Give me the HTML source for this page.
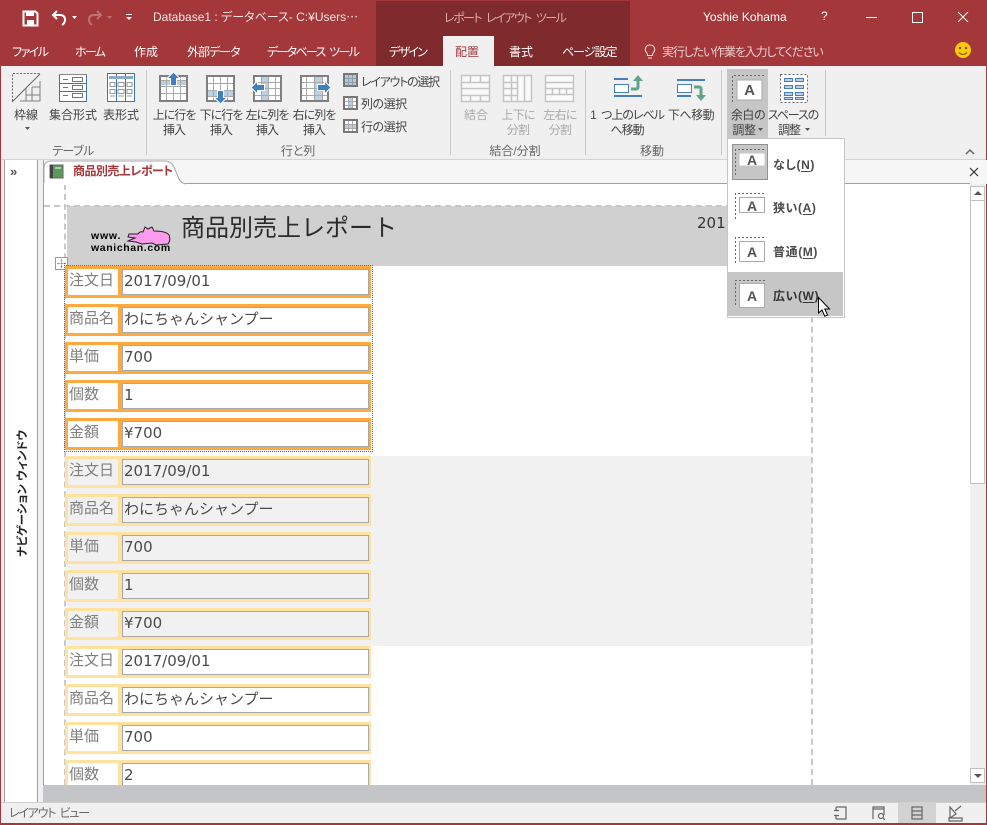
<!DOCTYPE html>
<html lang="ja"><head><meta charset="utf-8"><title>Access</title>
<style>
html,body{margin:0;padding:0;background:#f0f0f0}
#app{position:relative;width:987px;height:825px;overflow:hidden;background:#f0f0f0;font-family:"Liberation Sans","Noto Sans CJK JP",sans-serif;font-size:12px;font-feature-settings:"palt";color:#444}
.a{position:absolute}
.t{position:absolute;white-space:nowrap;line-height:16px}
.c{position:absolute;white-space:nowrap;line-height:15px;width:100px;margin-left:-50px;text-align:center}
.tab{position:absolute;top:44px;line-height:16px;color:#fff;white-space:nowrap}
.dim{color:#a9a9a9}
.g{color:#666}
.r{position:absolute;left:65px;width:306px;height:32px;background:#FFA93E}
.r.y{background:#FFE29F}
.l{position:absolute;left:3px;top:3px;width:50px;height:26px;background:#fff;color:#808080;font-family:"Noto Sans CJK JP",sans-serif;font-size:15px;line-height:22px;text-indent:1px}
.v{position:absolute;left:57px;top:3px;width:247px;height:26px;box-sizing:border-box;border:1px solid #a8a8a8;background:#fff;color:#4a4a4a;font-family:"DejaVu Sans","Noto Sans CJK JP",sans-serif;font-size:15px;line-height:23px;padding-left:1px}
.gr .l,.gr .v{background:#f1f1f1}
.k{font-family:"Noto Sans CJK JP",sans-serif;font-feature-settings:normal;line-height:21px}
.m{position:absolute;left:773px;font-weight:bold;color:#4a4a4a;line-height:16px;white-space:nowrap;letter-spacing:.6px}
.m u{text-underline-offset:2px}
</style></head><body>
<div id="app">

<div class="a" style="left:0;top:0;width:987px;height:66px;background:#A4373A"></div>
<div class="a" style="left:376px;top:1px;width:254px;height:65px;background:#7F2A2C"></div>
<div class="a" style="left:443px;top:36px;width:51px;height:30px;background:#f0f0f0"></div>
<div class="a" style="left:0;top:66px;width:1px;height:759px;background:#A4373A"></div>
<div class="a" style="left:986px;top:66px;width:1px;height:759px;background:#A4373A"></div>
<div class="a" style="left:0;top:823px;width:987px;height:2px;background:#A4373A"></div>

<div class="t" style="left:153px;top:9px;color:#f3e3e3">Database1 : データベース- C:¥Users⋯</div>
<div class="t" style="left:444px;top:10px;color:#d8aeae;letter-spacing:-1.5px;word-spacing:3px">レポート レイアウト ツール</div>
<div class="t" style="left:703px;top:9px;color:#fff">Yoshie Kohama</div>
<div class="t" style="left:821px;top:8px;color:#fff">?</div>

<div class="tab" style="left:12px;letter-spacing:-1.5px">ファイル</div>
<div class="tab" style="left:75px;letter-spacing:-1.7px">ホーム</div>
<div class="tab" style="left:134px">作成</div>
<div class="tab" style="left:187px;letter-spacing:-1px">外部データ</div>
<div class="tab" style="left:267px;letter-spacing:-1.7px;word-spacing:3px">データベース ツール</div>
<div class="tab" style="left:389px;letter-spacing:-1.7px">デザイン</div>
<div class="tab" style="left:455px;color:#A4373A">配置</div>
<div class="tab" style="left:509px">書式</div>
<div class="tab" style="left:562px;letter-spacing:-1px">ページ設定</div>
<div class="tab" style="left:662px;color:#eccfcf;letter-spacing:-1.15px">実行したい作業を入力してください</div>

<div class="a" style="left:727px;top:69px;width:41px;height:69px;background:#C6C6C6"></div>

<div class="a" style="left:4px;top:160px;width:983px;height:24px;background:#f6f6f6"></div>
<div class="a" style="left:1px;top:159px;width:985px;height:1px;background:#d4d4d4"></div>
<div class="a" style="left:4px;top:160px;width:34px;height:642px;background:#fff;border-left:1px solid #a0a0a0;border-right:1px solid #a0a0a0;box-sizing:border-box"></div>
<div class="a" style="left:38px;top:160px;width:5px;height:642px;background:#f0f0f0;border-right:1px solid #a0a0a0;box-sizing:content-box"></div>

<div class="a" style="left:44px;top:184px;width:926px;height:601px;overflow:hidden;background:#fff">
 <div class="a" style="left:-44px;top:-184px;width:987px;height:825px">
  <div class="a" style="left:67px;top:206px;width:745px;height:60px;background:#D0D0D0"></div>
  <div class="a" style="left:67px;top:456px;width:745px;height:190px;background:#f1f1f1"></div>
  <div class="a" style="left:44px;top:205px;width:768px;height:0;border-top:2px dashed #c8c8c8"></div>
  <div class="a" style="left:64px;top:184px;width:0;height:601px;border-left:2px dashed #c8c8c8"></div>
  <div class="a" style="left:811px;top:206px;width:0;height:579px;border-left:2px dashed #c8c8c8"></div>

  <div class="t k" style="left:181px;top:209px;font-size:24px;line-height:34px;color:#2b2b2b">商品別売上レポート</div>
  <div class="t" style="left:697px;top:214px;font-family:'DejaVu Sans',sans-serif;font-size:15px;line-height:18px;color:#333">2017/09/01</div>
  <div class="t" style="left:91px;top:230px;font-weight:bold;font-size:10.5px;line-height:12px;letter-spacing:.8px;color:#000">www.</div>
  <div class="t" style="left:91px;top:242px;font-weight:bold;font-size:10.5px;line-height:12px;letter-spacing:.62px;color:#000">wanichan.com</div>
  <svg class="a" style="left:126px;top:224px" width="46" height="24" viewBox="0 0 46 24"><path d="M3 10 L12 10 Q14 7 17 8 L19 3 L22 5 L26 3 L28 7 Q40 7 43 11 Q45 16 42 20 L30 21 L26 19 L16 20 L10 18 L2 17 L9 14 L2 13 Z" fill="#FF9BEF" stroke="#222" stroke-width="1"/></svg>

  <svg class="a" style="left:55px;top:257px" width="13" height="13" viewBox="0 0 13 13"><rect x=".5" y=".5" width="12" height="12" fill="#fff" stroke="#999"/><path d="M6.5 2.5v8M2.5 6.5h8" stroke="#777" stroke-dasharray="1 1"/><path d="M6.5 2l-1 1.5h2zM6.5 11l-1-1.500h2zM2 6.500l1.500-1v2zM11 6.500l-1.500-1v2z" fill="#555"/></svg>

  <div class="a" style="left:64px;top:265px;width:307px;height:185px;border:1px dotted #666"></div>
  <div class="r" style="top:266px"><div class="l">注文日</div><div class="v">2017/09/01</div></div>
  <div class="r" style="top:304px"><div class="l">商品名</div><div class="v k">わにちゃんシャンプー</div></div>
  <div class="r" style="top:342px"><div class="l">単価</div><div class="v">700</div></div>
  <div class="r" style="top:380px"><div class="l">個数</div><div class="v">1</div></div>
  <div class="r" style="top:418px"><div class="l">金額</div><div class="v">¥700</div></div>

  <div class="gr">
  <div class="r y" style="top:456px"><div class="l">注文日</div><div class="v">2017/09/01</div></div>
  <div class="r y" style="top:494px"><div class="l">商品名</div><div class="v k">わにちゃんシャンプー</div></div>
  <div class="r y" style="top:532px"><div class="l">単価</div><div class="v">700</div></div>
  <div class="r y" style="top:570px"><div class="l">個数</div><div class="v">1</div></div>
  <div class="r y" style="top:608px"><div class="l">金額</div><div class="v">¥700</div></div>
  </div>
  <div class="r y" style="top:646px"><div class="l">注文日</div><div class="v">2017/09/01</div></div>
  <div class="r y" style="top:684px"><div class="l">商品名</div><div class="v k">わにちゃんシャンプー</div></div>
  <div class="r y" style="top:722px"><div class="l">単価</div><div class="v">700</div></div>
  <div class="r y" style="top:760px"><div class="l">個数</div><div class="v">2</div></div>
 </div>
</div>

<div class="a" style="left:970px;top:184px;width:16px;height:601px;background:#f0f0f0"></div>
<div class="a" style="left:970px;top:186px;width:15px;height:15px;box-sizing:border-box;border:1px solid #c0c0c0;background:#fff"></div>
<div class="a" style="left:970px;top:200px;width:15px;height:284px;box-sizing:border-box;border:1px solid #c0c0c0;background:#fff"></div>
<div class="a" style="left:970px;top:768px;width:15px;height:15px;box-sizing:border-box;border:1px solid #c0c0c0;background:#fff"></div>
<div class="a" style="left:43px;top:785px;width:943px;height:17px;background:#C4C5C8"></div>
<div class="a" style="left:1px;top:802px;width:985px;height:1px;background:#d0d0d0"></div>
<div class="a" style="left:898px;top:803px;width:38px;height:20px;background:#d2d2d2"></div>

<div class="a" style="left:43px;top:183px;width:927px;height:1px;background:#a0a0a0"></div>
<svg class="a" style="left:43px;top:160px" width="146" height="25" viewBox="0 0 146 25"><path d="M1 24V8Q1 1 8 1H122Q128 1 131 7L136 19Q138 23 143 24" fill="#fff" stroke="#a8a8a8"/><rect x="1" y="23" width="136" height="2" fill="#fff"/></svg>
<div class="t" style="left:73px;top:163px;font-weight:bold;color:#A4373A;letter-spacing:-.55px">商品別売上レポート</div>

<div class="t" style="left:10px;top:164px;color:#555;font-size:13px;font-weight:bold">»</div>
<div class="t" style="left:-27px;top:499px;width:100px;text-align:center;transform:rotate(-90deg);font-weight:bold;font-size:11.500px;color:#222;letter-spacing:-.1px">ナビゲーション ウィンドウ</div>

<div class="c" style="left:26px;top:108px">枠線</div>
<div class="c" style="left:73px;top:108px">集合形式</div>
<div class="c" style="left:121px;top:108px">表形式</div>
<div class="c" style="left:174px;top:108px;letter-spacing:-1px">上に行を<br>挿入</div>
<div class="c" style="left:221px;top:108px;letter-spacing:-1px">下に行を<br>挿入</div>
<div class="c" style="left:267px;top:108px;letter-spacing:-1px">左に列を<br>挿入</div>
<div class="c" style="left:314px;top:108px;letter-spacing:-1px">右に列を<br>挿入</div>
<div class="t" style="left:361px;top:74px;letter-spacing:-1.25px">レイアウトの選択</div>
<div class="t" style="left:361px;top:96px;letter-spacing:-.5px">列の選択</div>
<div class="t" style="left:361px;top:119px;letter-spacing:-.5px">行の選択</div>
<div class="c dim" style="left:476px;top:108px">結合</div>
<div class="c dim" style="left:518px;top:108px;letter-spacing:-.7px">上下に<br>分割</div>
<div class="c dim" style="left:560px;top:108px;letter-spacing:-.7px">左右に<br>分割</div>
<div class="c" style="left:627px;top:108px;letter-spacing:-1px;word-spacing:3px">1 つ上のレベル<br>へ移動</div>
<div class="c" style="left:691px;top:108px;letter-spacing:-.5px">下へ移動</div>
<div class="c" style="left:748px;top:108px;letter-spacing:-.4px">余白の<br><span style="margin-left:-8px">調整</span></div>
<div class="c" style="left:793px;top:108px;letter-spacing:-1.1px">スペースの<br><span style="margin-left:-8px">調整</span></div>

<div class="c g" style="left:73px;top:144px;letter-spacing:-.5px">テーブル</div>
<div class="c g" style="left:298px;top:144px">行と列</div>
<div class="c g" style="left:515px;top:144px">結合/分割</div>
<div class="c g" style="left:652px;top:144px">移動</div>

<div class="a" style="left:727px;top:138px;width:118px;height:180px;box-sizing:border-box;background:#fff;border:1px solid #c6c6c6"></div>
<div class="a" style="left:732px;top:144px;width:36px;height:36px;box-sizing:border-box;background:#C6C6C6;border:1px solid #919191"></div>
<div class="a" style="left:728px;top:272px;width:115px;height:44px;background:#C6C6C6"></div>
<div class="m" style="top:157px">なし(<u>N</u>)</div>
<div class="m" style="top:200px">狭い(<u>A</u>)</div>
<div class="m" style="top:244px">普通(<u>M</u>)</div>
<div class="m" style="top:288px;color:#333">広い(<u>W</u>)</div>

<div class="t" style="left:9px;top:805px;color:#666;letter-spacing:-1.2px;word-spacing:2px">レイアウト ビュー</div>

<svg class="a" style="left:0;top:0" width="987" height="825" viewBox="0 0 987 825">
<defs>
<g id="grid"><rect x="1" y="1" width="27" height="25" fill="#fff" stroke="#808080" stroke-width="2"/></g>
</defs>
<!-- QAT -->
<path d="M23.500 11.500h12l2 2v12h-14z" fill="none" stroke="#fff" stroke-width="2"/><rect x="26" y="11" width="8" height="5" fill="#fff"/><rect x="27" y="20" width="7" height="5" fill="#fff"/>
<path d="M57 11l-4 4 4 4" fill="none" stroke="#fff" stroke-width="2"/><path d="M53 15h7q5 0 5 5 0 3-3 5" fill="none" stroke="#fff" stroke-width="2"/>
<path d="M72 16h5l-2.500 3z" fill="#fff"/>
<path d="M97 11l4 4-4 4" fill="none" stroke="#bb7275" stroke-width="2"/><path d="M101 15h-7q-5 0-5 5 0 3 3 5" fill="none" stroke="#bb7275" stroke-width="2"/>
<path d="M107 16h5l-2.500 3z" fill="#bb7275"/>
<path d="M126 14h6v1h-6zM126 17h6l-3 3z" fill="#fff"/>
<!-- window buttons -->
<path d="M866 17.500h11" stroke="#fff"/><rect x="912.500" y="12.500" width="10" height="10" fill="none" stroke="#fff"/><path d="M958 12l10 10M968 12l-10 10" stroke="#fff"/>
<!-- bulb + smiley -->
<path d="M650 45a4.500 4.500 0 0 1 3 8l-.5 2.500h-5l-.5-2.500a4.500 4.500 0 0 1 3-8zM648 58h4" fill="none" stroke="#f4e0e0"/>
<circle cx="963" cy="50" r="8" fill="#FFC80A"/><circle cx="960" cy="48" r="1.200" fill="#6b5a00"/><circle cx="966" cy="48" r="1.200" fill="#6b5a00"/><path d="M959 52.500q4 4 8 0" fill="none" stroke="#6b5a00"/>

<!-- separators -->
<g stroke="#c8c8c8"><path d="M146.500 70v85M450.500 70v85M585.500 70v85M721.500 70v85M825.500 70v66"/></g>

<!-- waku-sen -->
<g transform="translate(12 73)"><path d="M.5 28V.5H28" fill="none" stroke="#666" stroke-dasharray="2 1.500"/><path d="M0 29L28 1" stroke="#666"/><path d="M28 8V28H8M14 22H28M20 14V28M14 15V28M20 14H28" fill="none" stroke="#808080"/></g>
<!-- shugo -->
<g transform="translate(59 74)"><rect x=".5" y=".5" width="27" height="27" fill="#fff" stroke="#3D75B0"/><path d="M0 .5h28" stroke="#888"/><g fill="none" stroke="#777"><path d="M4 5.500h5M4 13.500h5M4 21.500h5"/><rect x="13.500" y="3.500" width="10" height="4"/><rect x="13.500" y="11.500" width="10" height="4"/><rect x="13.500" y="19.500" width="10" height="4"/></g><path d="M1 9.500h26M1 17.500h26" stroke="#3D75B0"/></g>
<!-- hyo -->
<g transform="translate(107 73)"><rect x=".5" y=".5" width="27" height="28" fill="#fff" stroke="#3D75B0"/><path d="M9.500 1v27M18.500 1v27" stroke="#3D75B0"/><rect x="2" y="3" width="24" height="3" fill="#8da9c7"/><g fill="none" stroke="#999"><path d="M3 9.500h5v4h-5zM3 16.500h5v4h-5zM3 23h5M11 9.500h6v4h-6zM11 16.500h6v4h-6zM11 23h6M20 9.500h5v4h-5zM20 16.500h5v4h-5zM20 23h5"/></g></g>
<!-- insert icons -->
<g transform="translate(159 75)"><use href="#grid"/><rect x="2" y="6" width="25" height="4" fill="#BCD0E3"/><path d="M2 5.500h25M2 11.500h25M2 18.500h25M7.500 2v23M14.500 2v23M21.500 2v23" stroke="#aaa"/><path d="M14.500 -3l6.500 6.500h-3.500v7h-6v-7h-3.500z" fill="#3F7FBF" stroke="#fff"/></g>
<g transform="translate(206 75)"><use href="#grid"/><rect x="2" y="16" width="25" height="5" fill="#BCD0E3"/><path d="M2 8.500h25M2 15.500h25M2 21.500h25M7.500 2v23M14.500 2v23M21.500 2v23" stroke="#aaa"/><path d="M14.500 29l-6.500-6.500h3.500v-7h6v7h3.500z" fill="#3F7FBF" stroke="#fff"/></g>
<g transform="translate(253 75)"><use href="#grid"/><rect x="8" y="2" width="7" height="23" fill="#BCD0E3"/><path d="M2 7.500h25M2 13.500h25M2 20.500h25M8.500 2v23M15.500 2v23M22.500 2v23" stroke="#aaa"/><path d="M-2 12.500l6.500-6.500v3.500h7v6h-7v3.500z" fill="#3F7FBF" stroke="#fff"/></g>
<g transform="translate(300 75)"><use href="#grid"/><rect x="14" y="2" width="8" height="23" fill="#BCD0E3"/><path d="M2 7.500h25M2 13.500h25M2 20.500h25M6.500 2v23M14.500 2v23M22.500 2v23" stroke="#aaa"/><path d="M31 12.500l-6.500-6.500v3.500h-7v6h7v3.500z" fill="#3F7FBF" stroke="#fff"/></g>
<!-- small select -->
<g transform="translate(343 73)"><rect x="1" y="1" width="13" height="12" fill="#b7c7d8" stroke="#777" stroke-width="2"/><path d="M5.500 2v10M9.500 2v10M2 5.500h11M2 9.500h11" stroke="#8f9fae"/></g>
<g transform="translate(343 96)"><rect x="1" y="1" width="13" height="12" fill="#fff" stroke="#777" stroke-width="2"/><rect x="5" y="2" width="5" height="10" fill="#BCD0E3"/><path d="M5.500 2v10M9.500 2v10M2 5.500h11M2 9.500h11" stroke="#aaa"/></g>
<g transform="translate(343 119)"><rect x="1" y="1" width="13" height="12" fill="#fff" stroke="#777" stroke-width="2"/><rect x="2" y="5" width="11" height="4" fill="#BCD0E3"/><path d="M5.500 2v10M9.500 2v10M2 5.500h11M2 9.500h11" stroke="#aaa"/></g>
<!-- merge/split -->
<g stroke="#c4c4c4" fill="#fafafa" stroke-width="1.500">
<g transform="translate(461 75)"><rect x=".5" y=".5" width="28" height="26"/><path d="M0 7.500h28M0 13.500h28M0 20.500h28M9.500 0v7M19.500 0v7M9.500 20v7M19.500 20v7" fill="none"/></g>
<g transform="translate(503 75)"><rect x=".5" y=".5" width="28" height="26"/><path d="M8.500 0v27M14.500 0v27M21.500 0v27M0 7.500h14M0 13.500h14M0 20.500h14" fill="none"/></g>
<g transform="translate(545 75)"><rect x=".5" y=".5" width="28" height="26"/><path d="M0 7.500h28M0 19.500h28M7.500 13v6M14.500 13v6M21.500 13v6M0 13.500h28" fill="none"/></g>
</g>
<!-- move -->
<g transform="translate(614 75)"><rect x="0" y="3" width="14" height="2" fill="#4A7EBB"/><rect x="0" y="20" width="28" height="2" fill="#4A7EBB"/><rect x=".5" y="9.500" width="14" height="8" fill="#fff" stroke="#4A7EBB"/><path d="M17 14h5q2 0 2-2V6" fill="none" stroke="#5FA58C" stroke-width="3"/><path d="M24 0l-5 6h10z" fill="#5FA58C"/></g>
<g transform="translate(677 75)"><rect x="0" y="4" width="28" height="2" fill="#4A7EBB"/><rect x="0" y="20" width="14" height="2" fill="#4A7EBB"/><rect x=".5" y="9.500" width="14" height="8" fill="#fff" stroke="#4A7EBB"/><path d="M17 12h5q2 0 2 2v6" fill="none" stroke="#5FA58C" stroke-width="3"/><path d="M24 26l-5-6h10z" fill="#5FA58C"/></g>
<!-- yohaku large -->
<path d="M732.500 102V75.500H766" fill="none" stroke="#666" stroke-dasharray="2 2"/>
<rect x="737" y="80" width="25" height="20" fill="#fff" stroke="#aaa"/>
<text x="749.500" y="95" font-family="Liberation Sans" font-size="15" font-weight="bold" fill="#555" text-anchor="middle">A</text>
<!-- space large -->
<rect x="780.500" y="74.500" width="27" height="28" fill="#fff" stroke="#666" stroke-dasharray="2 2"/>
<g fill="#BCD0E3" stroke="#4A7EBB"><rect x="784.500" y="78.500" width="8" height="3"/><rect x="795.500" y="78.500" width="8" height="3"/><rect x="784.500" y="85.500" width="8" height="3"/><rect x="795.500" y="85.500" width="8" height="3"/><rect x="784.500" y="92.500" width="8" height="3"/><rect x="795.500" y="92.500" width="8" height="3"/><rect x="784.500" y="97.500" width="8" height="2"/><rect x="795.500" y="97.500" width="8" height="2"/></g>
<!-- carets -->
<g fill="#555"><path d="M25 127h5l-2.500 3zM758 128h5l-2.500 3zM805 128h5l-2.500 3z"/></g>
<path d="M966 154l4-4 4 4" fill="none" stroke="#666" stroke-width="1.500"/>
<path d="M970 168l8 8M978 168l-8 8" stroke="#333" stroke-width="1.200"/>
<path d="M974 191l-4 4h8zM974 778l-4-4h8z" transform="translate(4 0)" fill="#555"/>
<!-- menu icons -->
<g fill="none" stroke="#666" stroke-dasharray="2 2"><path d="M735.500 175V149.500H765"/><path d="M735.500 219V193.500H765"/><path d="M735.500 263V237.500H765"/><path d="M735.500 305V280.500H765"/></g>
<g font-family="Liberation Sans" font-size="14" font-weight="bold" fill="#555" text-anchor="middle">
<rect x="739.500" y="153.500" width="25" height="12" fill="#fff"/><text x="752" y="165">A</text>
<rect x="739.500" y="197.500" width="25" height="15" fill="#fff" stroke="#aaa"/><text x="752" y="211">A</text>
<rect x="739.500" y="241.500" width="25" height="20" fill="#fff" stroke="#aaa"/><text x="752" y="257">A</text>
<rect x="739.500" y="283.500" width="25" height="24" fill="#fff" stroke="#aaa"/><text x="752" y="301">A</text>
</g>
<!-- cursor -->
<path d="M818.500 297.500V313l3.500-3 2.800 6.200 2.800-1.200-2.800-6h4.700z" fill="#fff" stroke="#000"/>
<!-- tab icon -->
<rect x="50" y="165" width="13" height="13" fill="#5C9A5C" stroke="#666"/><rect x="50" y="165" width="3" height="13" fill="#444"/><rect x="55" y="167" width="6" height="2" fill="#A8D0A8"/>
<!-- statusbar icons -->
<g fill="none" stroke="#666" stroke-width="1.200">
<path d="M836 807h10v12h-10M836 807v3M836 816v3M834 810.500h5M834 815.500h5"/>
<path d="M873 819v-12h11v8M873 809h11"/><circle cx="881" cy="816" r="2.500"/><path d="M883 818l2 2"/>
<rect x="912" y="807" width="10" height="12"/><path d="M912 811h10M912 815h10"/>
<path d="M950 818v-11l6 7zM949 818h13v3h-13zM955 811l6-5"/>
</g>
</svg>
</div>
</body></html>
